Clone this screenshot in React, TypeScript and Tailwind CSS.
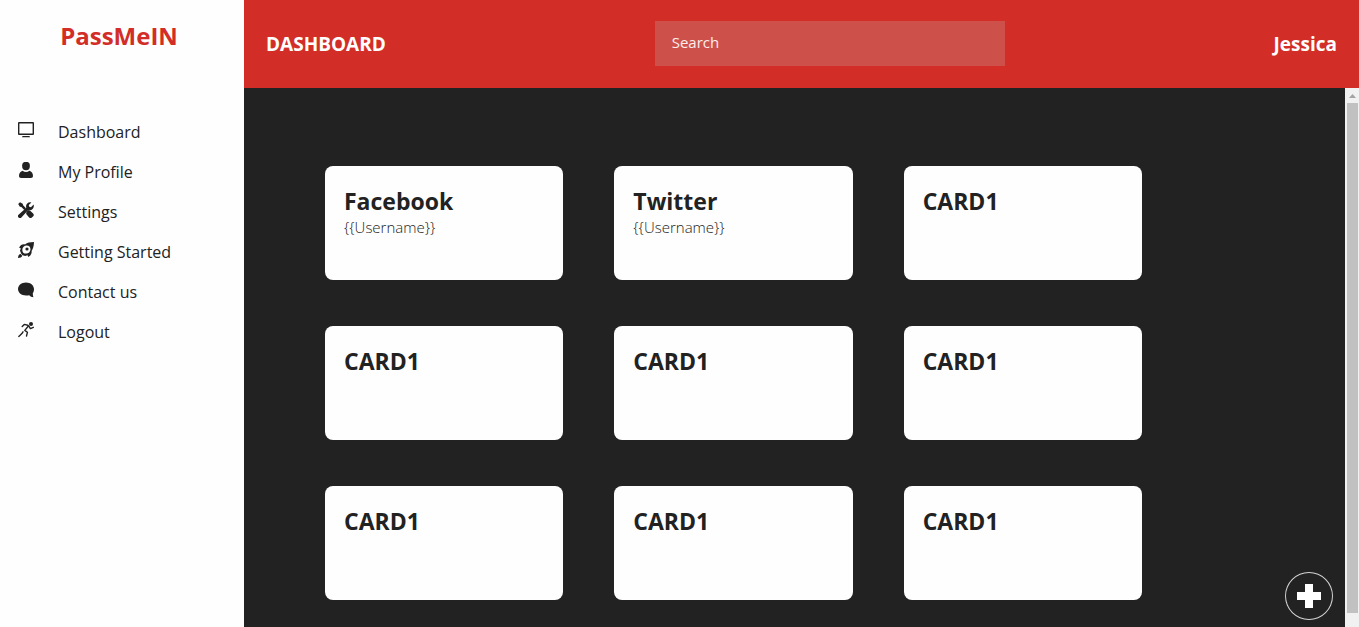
import type { ReactNode } from "react";

type IconProps = { children: ReactNode };

function Icon({ children }: IconProps) {
  return (
    <svg viewBox="0 0 16 16" className="size-4 shrink-0" fill="currentColor" aria-hidden="true">
      {children}
    </svg>
  );
}

const displayIcon = (
  <Icon>
    <path fillRule="evenodd" d="M1 0h14a1 1 0 0 1 1 1v11a1 1 0 0 1-1 1H1a1 1 0 0 1-1-1V1a1 1 0 0 1 1-1zM1.400 1.400v10.200h13.200V1.400z" />
    <path d="M4.500 14h7l.5 1.300H4z" />
  </Icon>
);

const userIcon = (
  <Icon>
    <ellipse cx="8" cy="4" rx="3.900" ry="4.200" />
    <path d="M4.600 8.800C2.500 9.500 1 11.300 1 14c0 1.300.8 2 2.200 2h9.600c1.400 0 2.200-.7 2.200-2 0-2.700-1.500-4.500-3.600-5.200-1.900 1.600-4.900 1.600-6.800 0z" />
  </Icon>
);

const toolsIcon = (
  <Icon>
    <path d="M2 .2.2 2l1.700 2.700 1.500.3 2.900 2.900 1.700-1.700-2.900-2.900-.4-1.500z" />
    <path d="m9.200 9 1.400-1 .9.400.7.300 2.900 2.700c.9.900.9 2 .1 2.800l-1.300 1.300c-.8.800-1.900.8-2.800-.1L8.600 12.600c-.5-.6-.5-1.200-.3-2z" />
    <path d="M13.400.4a4.200 4.200 0 0 0-5.100 5.400L.8 12.400a2 2 0 1 0 2.800 2.800l6.700-7.300a4.200 4.200 0 0 0 5.300-5.300L13 5.200l-1.800-.4-.4-1.800z" />
  </Icon>
);

const rocketIcon = (
  <Icon>
    <path
      fillRule="evenodd"
      d="M16 0c-3.800 0-7 .8-9 2.400-2.600-.4-4.700.7-5.900 3.300l1.700.6-.8 2.400 1.400 3.300 1.200 1.200 2.500.8 2.500-.8.700 1.700c2.500-1.200 3.600-3.500 3.300-5.900C15 7 15.900 3.900 16 0zM8.600 3.500a4 4 0 0 1 3.900 3.900c-.2 2.300-2 4.100-4.300 4.200a3.900 3.900 0 0 1-3.900-3.900c.1-2.300 2-4.100 4.300-4.200z"
    />
    <circle cx="9" cy="7" r="1.600" />
    <path d="M2.300 11.800C.8 12.500.1 13.900 0 16c2.200-.1 3.700-.8 4.300-2.300z" />
  </Icon>
);

const bubbleIcon = (
  <Icon>
    <path d="M8 .4c4.400 0 8 2.800 8 6.500 0 1.900-.5 3.200-1.200 4.200 0 1.600.1 2.800.6 4.100-1.800-.1-3.100-.8-4.200-2-1 .2-2 .2-3.200.2-4.400 0-8-2.800-8-6.500S3.600.4 8 .4z" />
  </Icon>
);

const runIcon = (
  <Icon>
    <circle cx="13" cy="2" r="2" />
    <g fill="none" stroke="currentColor" strokeLinecap="round" strokeLinejoin="round" strokeWidth="1.400">
      <path d="M4.200 4.600 6.300 2.400l3.500.8 1.400 1.400 1.200 2 2.900-1.300" />
      <path d="M10.200 4.200 6.800 8.400l2.600 1.900-.9 3.700" />
      <path d="M5 9.800 3.900 11.600.8 14.400" />
    </g>
  </Icon>
);

const navItems = [
  { label: "Dashboard", icon: displayIcon },
  { label: "My Profile", icon: userIcon },
  { label: "Settings", icon: toolsIcon },
  { label: "Getting Started", icon: rocketIcon },
  { label: "Contact us", icon: bubbleIcon },
  { label: "Logout", icon: runIcon },
];

const cards = [
  { title: "Facebook", username: "{{Username}}" },
  { title: "Twitter", username: "{{Username}}" },
  { title: "CARD1" },
  { title: "CARD1" },
  { title: "CARD1" },
  { title: "CARD1" },
  { title: "CARD1" },
  { title: "CARD1" },
  { title: "CARD1" },
];

function Sidebar() {
  return (
    <aside className="w-[244px] shrink-0 bg-[#fefefe]">
      <h2 className="pt-5 pr-[6px] text-center text-2xl font-bold text-[#d32d27]">PassMeIN</h2>
      <nav className="pt-[60px]">
        <ul>
          {navItems.map((item) => (
            <li key={item.label}>
              <a href="#" className="flex h-10 items-start gap-6 pl-[18px]">
                <span className="pt-[10px]">{item.icon}</span>
                <span className="pt-2 text-base">{item.label}</span>
              </a>
            </li>
          ))}
        </ul>
      </nav>
    </aside>
  );
}

function Header() {
  return (
    <header className="flex h-[88px] shrink-0 items-center justify-between bg-[#d32d27] px-[22px] text-white">
      <h1 className="text-[19px] font-bold">DASHBOARD</h1>
      <input
        type="text"
        aria-label="Search"
        placeholder="Search"
        className="mb-px h-[45px] w-[350px] bg-[#ce504a] px-[17px] pb-1 text-[15px] text-white outline-none placeholder:text-white/90"
      />
      <a href="#" className="text-[19px] font-bold">
        Jessica
      </a>
    </header>
  );
}

function ScrollTrack() {
  return (
    <div className="flex w-[14px] shrink-0 flex-col items-center bg-[#f1f1f1] pb-[14px] pl-px" aria-hidden="true">
      <svg viewBox="0 0 11 15" className="h-[15px] w-[11px] shrink-0" fill="#a3a3a3">
        <path d="M2 10h7L5.500 6z" />
      </svg>
      <div className="w-[11px] flex-1 bg-[#c1c1c1]" />
    </div>
  );
}

export default function App() {
  return (
    <div className="flex h-screen overflow-hidden bg-[#222222] font-['Open_Sans',sans-serif] text-[#222222]">
      <Sidebar />
      <div className="flex min-w-0 flex-1 flex-col">
        <Header />
        <div className="flex min-h-0 flex-1">
          <main className="relative min-w-0 flex-1 overflow-hidden pt-[78px] pl-[81px]">
            <div className="grid w-full max-w-[817px] auto-rows-[114px] grid-cols-3 gap-x-[51px] gap-y-[46px]">
              {cards.map((card, index) => (
                <article key={index} className="rounded-lg bg-[#fefefe] px-[19px] pt-[19px]">
                  <h3 className="text-[23px] leading-8 font-bold">{card.title}</h3>
                  {card.username && <p className="text-[15px] leading-5 font-light">{card.username}</p>}
                </article>
              ))}
            </div>
            <button
              type="button"
              aria-label="Add account"
              className="absolute right-[12px] bottom-[7px] flex size-12 items-center justify-center rounded-full border border-white/80 bg-[#222222] text-white"
            >
              <svg viewBox="0 0 24 24" className="size-6" fill="currentColor" aria-hidden="true">
                <path d="M8 0h8v8h8v8h-8v8H8v-8H0V8h8z" />
              </svg>
            </button>
          </main>
          <ScrollTrack />
        </div>
      </div>
    </div>
  );
}
